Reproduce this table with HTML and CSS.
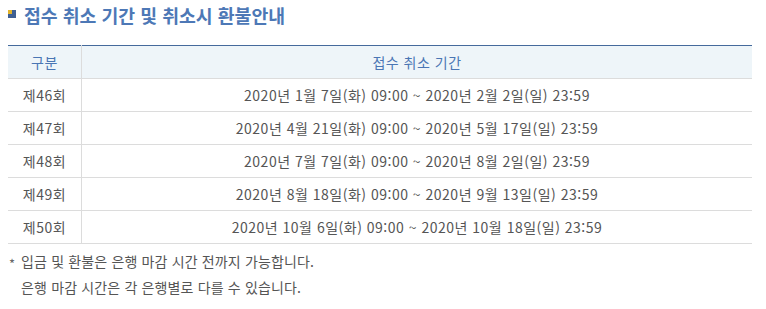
FILE: index.html
```html
<!DOCTYPE html>
<html lang="ko">
<head>
<meta charset="utf-8">
<link rel="stylesheet" href="styles.css">
</head>
<body>
<div class="wrap">
  <h2 class="title"><span class="bullet"></span>접수 취소 기간 및 취소시 환불안내</h2>
  <table class="tbl">
    <thead>
      <tr><th class="c1">구분</th><th>접수 취소 기간</th></tr>
    </thead>
    <tbody>
      <tr><td class="c1">제46회</td><td>2020년 1월 7일(화) 09:00 ~ 2020년 2월 2일(일) 23:59</td></tr>
      <tr><td class="c1">제47회</td><td>2020년 4월 21일(화) 09:00 ~ 2020년 5월 17일(일) 23:59</td></tr>
      <tr><td class="c1">제48회</td><td>2020년 7월 7일(화) 09:00 ~ 2020년 8월 2일(일) 23:59</td></tr>
      <tr><td class="c1">제49회</td><td>2020년 8월 18일(화) 09:00 ~ 2020년 9월 13일(일) 23:59</td></tr>
      <tr><td class="c1">제50회</td><td>2020년 10월 6일(화) 09:00 ~ 2020년 10월 18일(일) 23:59</td></tr>
    </tbody>
  </table>
  <ul class="notes">
    <li><span class="star">*</span>입금 및 환불은 은행 마감 시간 전까지 가능합니다.</li>
    <li><span class="star"></span>은행 마감 시간은 각 은행별로 다를 수 있습니다.</li>
  </ul>
</div>
</body>
</html>
```
FILE: styles.css
```css
html, body { margin: 0; padding: 0; background: #fff; }
body { font-family: "Noto Sans CJK KR", "Noto Sans", sans-serif; color: #555; }
.wrap { padding: 0 14px 0 8px; }
.title {
  margin: 0;
  height: 45px;
  padding-top: 3px;
  box-sizing: border-box;
  display: flex;
  align-items: flex-start;
  font-size: 18.3px;
  font-weight: 700;
  color: #4d78b6;
  line-height: 24px;
}
.bullet {
  width: 8px; height: 8px;
  margin: 7px 8px 0 0;
  background: linear-gradient(#e3b42a, #e3b42a) 0 0 / 4px 4px no-repeat, #3f5f92;
  flex: none;
}
.tbl {
  width: 744px;
  border-collapse: collapse;
  border-top: 1px solid #456a9c;
  font-size: 14px;
  letter-spacing: 0.5px;
}
.tbl th, .tbl td {
  border-bottom: 1px solid #dcdcdc;
  text-align: center;
  padding: 0;
  height: 32px;
  font-weight: 400;
}
.tbl th { background: #eef5f9; color: #4a76b4; height: 32px; }
.tbl .c1 { width: 73px; border-right: 1px solid #dcdcdc; }
.notes { list-style: none; margin: 4px 0 0; padding: 0; font-size: 14px; letter-spacing: 0.15px; line-height: 26px; color: #555; }
.notes li { display: flex; }
.star { width: 13px; flex: none; font-size: 13px; line-height: 1; padding-top: 9px; padding-left: 1px; box-sizing: border-box; letter-spacing: 0; color: #666; }
```
